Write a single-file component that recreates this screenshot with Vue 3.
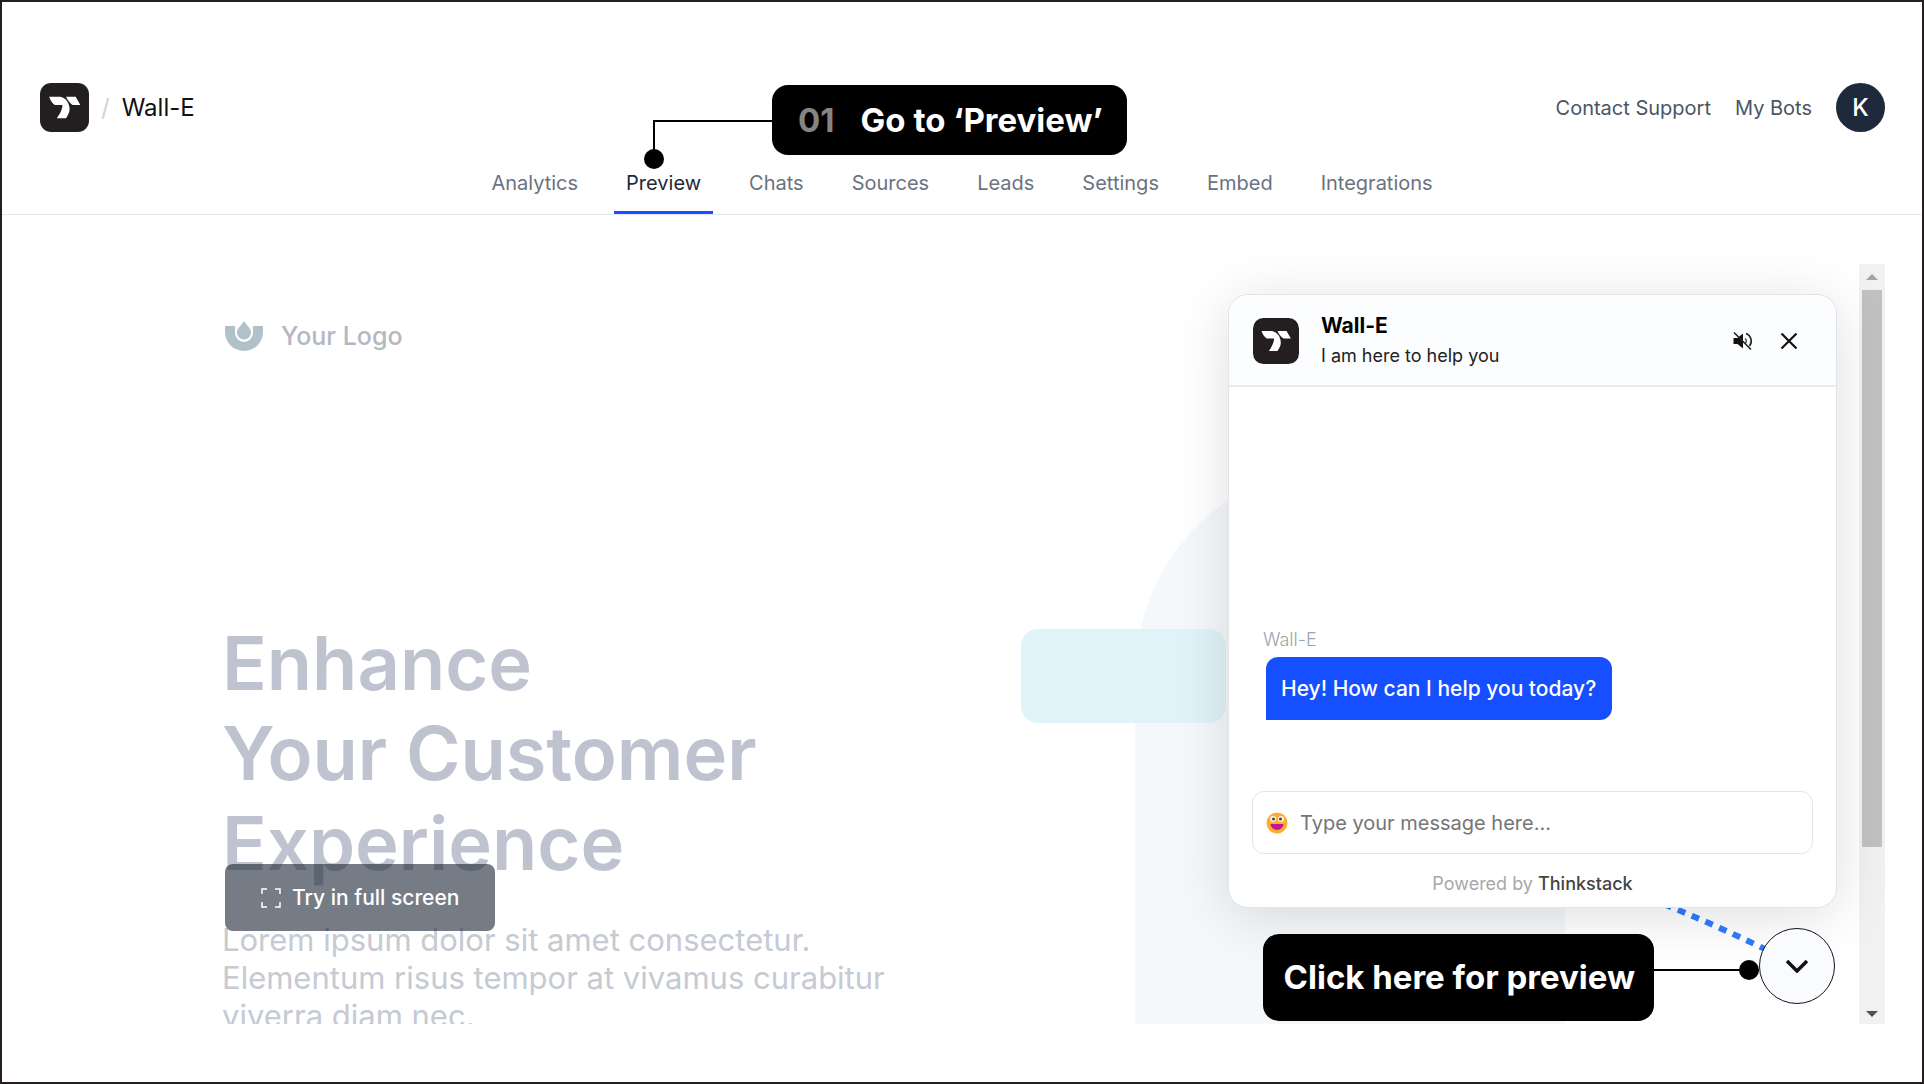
<template>
  <div class="page">
    <header class="header">
      <div class="top-bar">
        <div class="brand">
          <svg class="brand-logo" viewBox="0 0 48 48" aria-hidden="true">
            <rect width="48" height="48" rx="11" fill="#231f20" />
            <path :d="logoPath" fill="#fff" />
          </svg>
          <span class="slash">/</span>
          <span class="bot-name">Wall-E</span>
        </div>
        <div class="account">
          <a href="#">Contact Support</a>
          <a href="#">My Bots</a>
          <button class="avatar" type="button">K</button>
        </div>
      </div>
      <nav class="tabs">
        <div v-for="tab in tabs" :key="tab" class="tab-item">
          <a href="#" class="tab" :class="{ active: tab === activeTab }" @click.prevent="activeTab = tab">{{ tab }}</a>
          <!-- step callout -->
          <div v-if="tab === 'Preview'" class="step">
            <div class="step-line"></div>
            <div class="step-dot"></div>
            <div class="step-label"><span class="step-number">01</span>Go to ‘Preview’</div>
          </div>
        </div>
      </nav>
    </header>

    <main class="frame">
      <section class="site">
        <div class="hero">
          <div class="site-logo">
            <svg viewBox="0 0 38 30" aria-hidden="true">
              <path d="M0 5h10v7a9 9 0 0 0 18 0V5h10v6a19 19 0 0 1-38 0z" fill="#b1c1c9" />
              <path d="M19 0c3 5 7 7 7 11.500a7 7 0 0 1-14 0C12 7 16 5 19 0z" fill="#b1c1c9" />
            </svg>
            <span>Your Logo</span>
          </div>
          <h1>Enhance<br />Your Customer<br />Experience</h1>
          <p>Lorem ipsum dolor sit amet consectetur. Elementum risus tempor at vivamus curabitur viverra diam nec.</p>
        </div>
        <svg class="artwork" viewBox="0 0 838 562" aria-hidden="true">
          <path d="M114 562V215a215 215 0 0 1 430 0v347z" fill="#f4f8fb" />
          <rect y="167" width="205" height="94" rx="17" fill="#e0f3f8" />
          <path d="M615 431Q690 460 760 495" fill="none" stroke="#2f7bff" stroke-width="6" stroke-dasharray="8 7" />
        </svg>
      </section>

      <button class="fullscreen" type="button">
        <svg viewBox="0 0 20 20" aria-hidden="true">
          <path d="M1 6V1h5M14 1h5v5M19 14v5h-5M6 19H1v-5" fill="none" stroke="#fff" stroke-width="1.500" />
        </svg>
        Try in full screen
      </button>

      <section class="chat">
        <div class="chat-header">
          <svg class="chat-logo" viewBox="0 0 48 48" aria-hidden="true">
            <rect width="48" height="48" rx="11" fill="#231f20" />
            <path :d="logoPath" fill="#fff" />
          </svg>
          <div class="chat-title">
            <strong>Wall-E</strong>
            <span>I am here to help you</span>
          </div>
          <button class="icon-button" type="button" aria-label="Mute">
            <svg viewBox="0 0 24 24" width="24" height="24">
              <path d="M2.500 9h4L12 4.500v15L6.500 15h-4z" fill="#111" />
              <path d="M14 9.500a3 3 0 0 1 0 5" fill="none" stroke="#555" stroke-width="1.500" />
              <path d="M15 4.500a8 8 0 0 1 3.500 12.500M3 3.500l17 17" fill="none" stroke="#222" stroke-width="1.600" />
            </svg>
          </button>
          <button class="icon-button" type="button" aria-label="Close">
            <svg viewBox="0 0 24 24" width="24" height="24">
              <path d="M4.500 4.500l15 15M19.500 4.500l-15 15" fill="none" stroke="#111" stroke-width="2.200" />
            </svg>
          </button>
        </div>
        <div class="messages">
          <span class="sender">Wall-E</span>
          <div class="bubble">Hey! How can I help you today?</div>
        </div>
        <div class="composer">
          <svg viewBox="0 0 22 22" aria-hidden="true">
            <circle cx="11" cy="11" r="10.500" fill="#ffab32" />
            <circle cx="7" cy="7" r="3" fill="#fff3e0" />
            <circle cx="15" cy="7" r="3" fill="#fff3e0" />
            <circle cx="7.500" cy="7" r="1.500" fill="#37474f" />
            <circle cx="14.500" cy="7" r="1.500" fill="#37474f" />
            <path d="M4.500 12h13a6.500 6 0 0 1-13 0z" fill="#b71c8a" />
          </svg>
          <input v-model="message" type="text" aria-label="Message" placeholder="Type your message here..." />
        </div>
        <div class="powered">Powered by <a href="#">Thinkstack</a></div>
      </section>

      <div class="launch-row">
        <div class="launch-label">Click here for preview</div>
        <div class="launch-line"></div>
        <button class="launcher" type="button" aria-label="Toggle chat">
          <svg viewBox="0 0 24 14" width="24" height="14">
            <path d="M2 2l10 10L22 2" fill="none" stroke="#111" stroke-width="3.500" />
          </svg>
        </button>
      </div>

      <div class="scrollbar">
        <button class="up" type="button" aria-label="Scroll up">
          <svg viewBox="0 0 12 6" width="12" height="6"><path d="M0 6l6-6 6 6z" fill="#a3a3a3" /></svg>
        </button>
        <div class="track"><div class="thumb"></div></div>
        <button class="down" type="button" aria-label="Scroll down">
          <svg viewBox="0 0 12 6" width="12" height="6"><path d="M0 0l6 6 6-6z" fill="#505050" /></svg>
        </button>
      </div>
    </main>
  </div>
</template>

<script setup>
import { ref } from "vue";

const tabs = ["Analytics", "Preview", "Chats", "Sources", "Leads", "Settings", "Embed", "Integrations"];
const activeTab = ref("Preview");
const message = ref("");

// shared by the top bar and the chat header
const logoPath =
  "M9 13.500H20C26 15 29 20 29 26C29 29 27 32 25.500 34.500H16.500C19 31 22 26 22 21.500H14.500C12 20 10 17 9 13.500ZM25.500 13.500H35L39.500 21.500H32C29.500 20 27 17 25.500 13.500Z";
</script>

<style>
body {
  margin: 0;
}
</style>

<style scoped>
.page {
  display: flex;
  flex-direction: column;
  box-sizing: border-box;
  height: 100vh;
  padding-bottom: 58px;
  border: 2px solid #231f20;
  background: #fff;
  font-family: "Inter", sans-serif;
  overflow: hidden;
}

button {
  padding: 0;
  border: 0;
  background: none;
  font: inherit;
  cursor: pointer;
}

a {
  color: inherit;
  text-decoration: none;
}

/* header */
.header {
  padding-top: 81px;
  border-bottom: 1px solid #e5e7eb;
}

.top-bar {
  display: flex;
  justify-content: space-between;
  padding: 0 37px 0 38px;
}

.brand {
  display: flex;
  align-items: center;
  font-size: 24px;
  line-height: 49px;
  color: #111;
}

.brand-logo {
  width: 49px;
  height: 49px;
}

.slash {
  margin: 0 12px;
  color: #d1d5db;
}

.account {
  display: flex;
  align-items: center;
  gap: 24px;
  font-size: 20px;
  color: #4b5563;
}

.avatar {
  width: 49px;
  height: 49px;
  border-radius: 50%;
  background: #1e293b;
  color: #fff;
  font-size: 24px;
  font-weight: 500;
}

.tabs {
  display: flex;
  justify-content: center;
  gap: 24px;
  margin-top: 32px;
}

.tab-item {
  position: relative;
}

.tab {
  display: block;
  padding: 7px 12px 15px;
  border-bottom: 3px solid transparent;
  color: #6b7280;
  font-size: 20px;
  line-height: 25px;
}

.tab.active {
  border-color: #164fff;
  color: #1f2937;
}

.step-line {
  position: absolute;
  left: 39px;
  bottom: 60px;
  width: 120px;
  height: 32px;
  border-top: 2px solid #000;
  border-left: 2px solid #000;
}

.step-dot {
  position: absolute;
  left: 30px;
  bottom: 45px;
  width: 20px;
  height: 20px;
  border-radius: 50%;
  background: #000;
}

.step-label {
  position: absolute;
  left: 158px;
  bottom: 59px;
  padding: 0 24px 0 26px;
  border-radius: 16px;
  background: #000;
  color: #fff;
  font-size: 33px;
  font-weight: 700;
  line-height: 70px;
  white-space: nowrap;
}

.step-number {
  margin-right: 26px;
  color: #858585;
}

/* previewed site */
.frame {
  position: relative;
  display: flex;
  flex: 1;
  min-height: 0;
  margin: 49px 37px 0 38px;
}

.site {
  display: flex;
  flex: 1;
  justify-content: space-between;
  overflow: hidden;
}

.hero {
  width: 700px;
  padding: 54px 0 0 182px;
}

.site-logo {
  display: flex;
  align-items: center;
  gap: 18px;
  padding-left: 3px;
  color: #b4b8bf;
  font-size: 25px;
  font-weight: 500;
  line-height: 36px;
}

.site-logo svg {
  width: 38px;
  height: 30px;
}

h1 {
  margin: 264px 0 0;
  color: #bfc3cf;
  font-size: 74px;
  font-weight: 600;
  line-height: 90px;
}

p {
  margin: 33px 0 0;
  color: #c5cad3;
  font-size: 31px;
  line-height: 38px;
}

.artwork {
  flex: none;
  width: 838px;
  height: 562px;
  margin-top: 198px;
}

.fullscreen {
  position: absolute;
  left: 185px;
  bottom: 93px;
  display: flex;
  align-items: center;
  gap: 11px;
  padding: 20px 36px;
  border-radius: 8px;
  background: rgba(31, 41, 58, 0.61);
  color: #fff;
  font-size: 21px;
  font-weight: 500;
  line-height: 27px;
}

.fullscreen svg {
  width: 20px;
  height: 20px;
}

/* chat window */
.chat {
  position: absolute;
  right: 48px;
  bottom: 116px;
  display: flex;
  flex-direction: column;
  box-sizing: border-box;
  width: 609px;
  height: 614px;
  border: 1px solid #e2e4e8;
  border-radius: 20px;
  background: #fff;
  box-shadow: 0 8px 56px rgba(0, 0, 0, 0.13);
}

.chat-header {
  display: flex;
  align-items: center;
  height: 92px;
  padding: 2px 35px 0 24px;
  box-sizing: border-box;
  border-bottom: 2px solid #e9ebf0;
  border-radius: 20px 20px 0 0;
  background: #fcfdff;
}

.chat-logo {
  width: 46px;
  height: 46px;
}

.chat-title {
  display: flex;
  flex: 1;
  flex-direction: column;
  gap: 2px;
  margin-left: 22px;
  color: #222;
  font-size: 18px;
  line-height: 28px;
}

.chat-title strong {
  color: #000;
  font-size: 21px;
  font-weight: 700;
}

.icon-button {
  display: flex;
  margin-left: 22px;
}

.messages {
  display: flex;
  flex: 1;
  flex-direction: column;
  align-items: flex-start;
  justify-content: flex-end;
  padding: 0 37px 71px;
}

.sender {
  margin: 0 0 5px -3px;
  color: #9ca3af;
  font-size: 18px;
  font-weight: 300;
  line-height: 24px;
}

.bubble {
  padding: 0 16px 0 15px;
  border-radius: 12px 12px 12px 0;
  background: #164fff;
  color: #fff;
  font-size: 21px;
  font-weight: 500;
  line-height: 63px;
}

.composer {
  display: flex;
  align-items: center;
  gap: 12px;
  margin: 0 23px;
  padding: 0 13px;
  border: 1px solid #e2e4ec;
  border-radius: 12px;
}

.composer svg {
  width: 22px;
  height: 22px;
}

.composer input {
  flex: 1;
  height: 61px;
  padding: 0;
  border: 0;
  outline: none;
  background: none;
  color: #111;
  font-family: inherit;
  font-size: 20px;
}

.composer input::placeholder {
  color: #757575;
}

.powered {
  padding: 18px 0 11px;
  color: #a8a8a8;
  font-size: 18px;
  line-height: 24px;
  text-align: center;
}

.powered a {
  color: #444;
  font-weight: 500;
}

/* launcher */
.launch-row {
  position: absolute;
  right: 50px;
  bottom: 3px;
  display: flex;
  align-items: flex-start;
}

.launch-label {
  margin-top: 6px;
  padding: 0 19px 0 21px;
  border-radius: 16px;
  background: #000;
  color: #fff;
  font-size: 33px;
  font-weight: 700;
  line-height: 87px;
}

.launch-line {
  position: relative;
  width: 105px;
  height: 2px;
  margin-top: 41px;
  background: #000;
}

.launch-line::after {
  position: absolute;
  top: -9px;
  right: 0;
  width: 20px;
  height: 20px;
  border-radius: 50%;
  background: #000;
  content: "";
}

.launcher {
  display: flex;
  align-items: center;
  justify-content: center;
  box-sizing: border-box;
  width: 76px;
  height: 76px;
  border: 1px solid #111;
  border-radius: 50%;
  background: #fafbff;
}

/* scrollbar */
.scrollbar {
  display: flex;
  flex-direction: column;
  width: 26px;
  background: #f1f1f1;
}

.scrollbar button {
  display: flex;
  align-items: center;
  justify-content: center;
  height: 26px;
}

.scrollbar .down {
  height: 20px;
}

.track {
  flex: 1;
  padding: 0 3px;
}

.thumb {
  height: 78%;
  background: #c1c1c1;
}
</style>
